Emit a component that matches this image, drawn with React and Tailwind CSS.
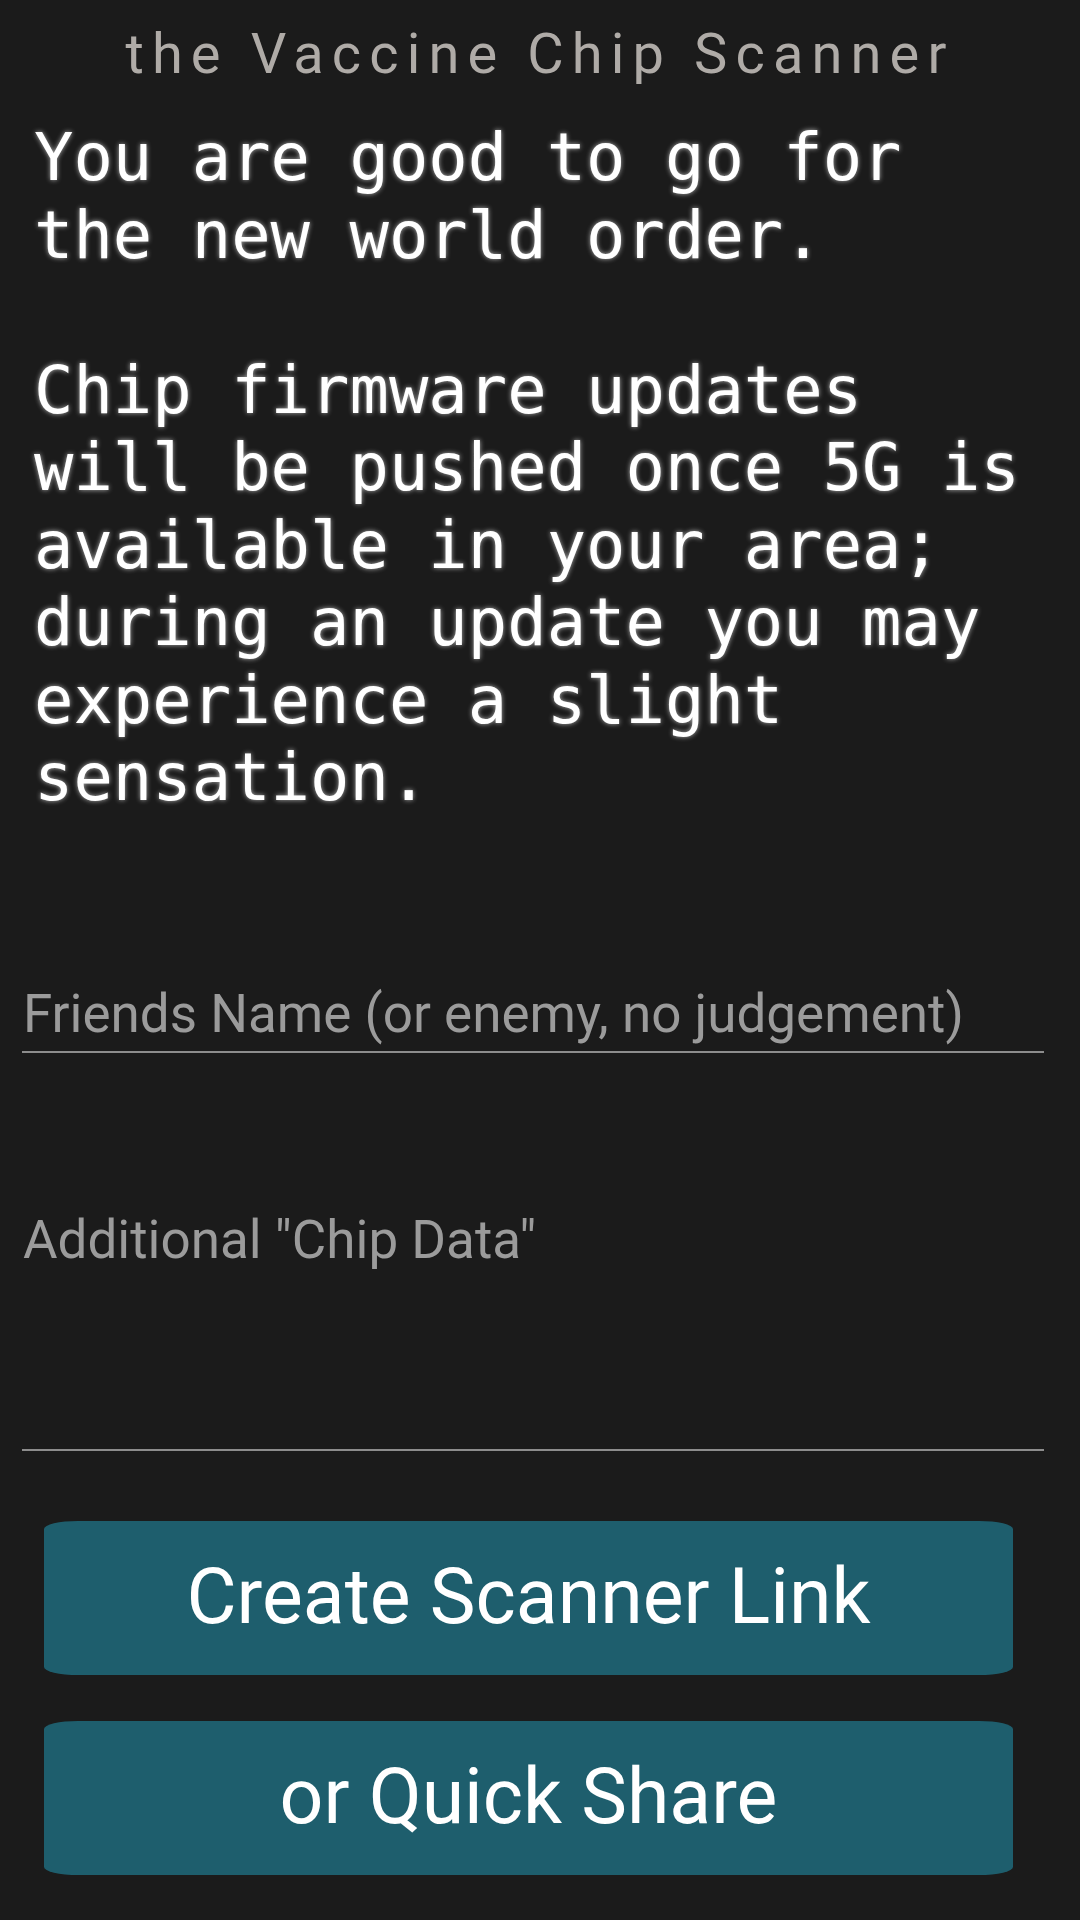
/** Vaccine chip scanner result screen. */
export default function App() {
  return (
    <div className="w-full min-h-[1920px] bg-[#1b1b1b] font-['Roboto',sans-serif] overflow-hidden">
      <h1 className="pt-[21px] text-center text-[56px] leading-[66px] tracking-[0.145em] text-[#afaba7] font-normal">
        the Vaccine Chip Scanner
      </h1>

      <p className="mt-[32px] pl-[34px] pr-[34px] whitespace-pre-line font-['DejaVu_Sans_Mono',monospace] text-[65.5px] leading-[77.5px] text-white [text-shadow:0_0_5px_rgba(255,255,255,0.65)]">
        {"You are good to go for the new world order.\n\nChip firmware updates will be pushed once 5G is available in your area; during an update you may experience a slight sensation."}
      </p>

      <div className="mt-[167px] ml-[22px] w-[1022px] flex flex-col">
        <input
          type="text"
          placeholder="Friends Name (or enemy, no judgement)"
          className="w-full bg-transparent outline-none text-[53px] leading-[62px] h-[69px] pb-[7px] px-[1px] text-white placeholder:text-[#9b9b9b] border-b-2 border-[#8d8d8d]"
        />
        <textarea
          placeholder={'Additional "Chip Data"'}
          className="mt-[156px] w-full h-[242px] resize-none bg-transparent outline-none text-[53px] leading-[62px] px-[1px] text-white placeholder:text-[#9b9b9b] border-b-2 border-[#8d8d8d]"
        />
      </div>

      <div className="mt-[70px] ml-[44px] w-[969px] flex flex-col gap-[46px]">
        <button className="h-[154px] w-full bg-[#1e5e6d] rounded-[34px/8px] text-white text-[77px] leading-none">
          Create Scanner Link
        </button>
        <button className="h-[154px] w-full bg-[#1e5e6d] rounded-[34px/8px] text-white text-[77px] leading-none">
          or Quick Share
        </button>
      </div>
    </div>
  );
}
